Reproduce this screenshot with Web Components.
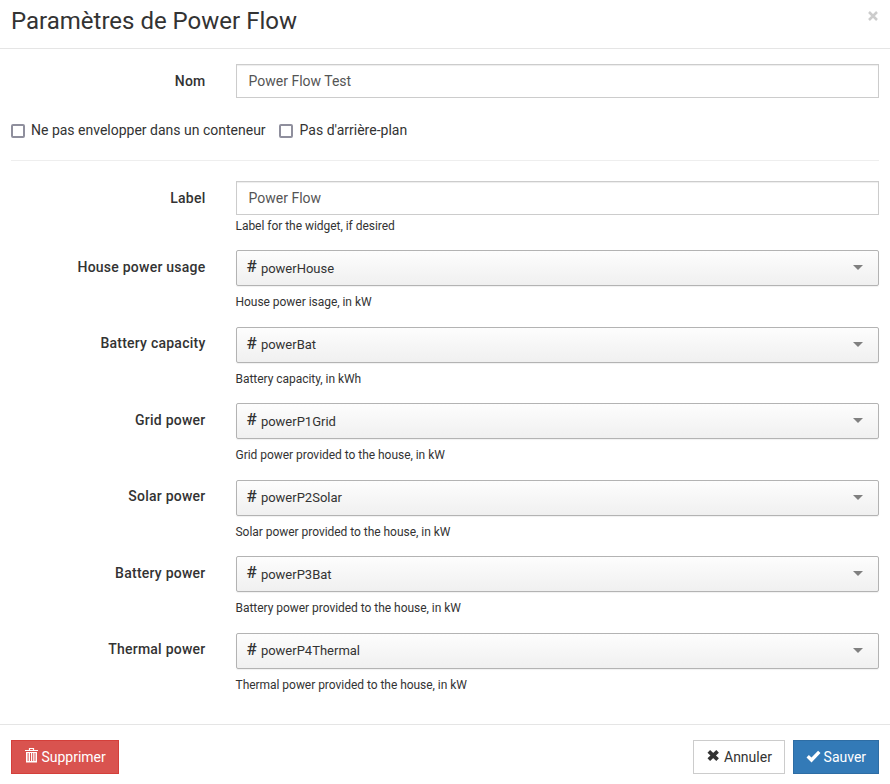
<!DOCTYPE html>
<html lang="fr">
<head>
<meta charset="utf-8">
<title>Paramètres de Power Flow</title>
<style>
body{margin:0;background:#fff;color:#333;font:14px/20px Roboto,"Liberation Sans",sans-serif}
</style>
</head>
<body>
<settings-dialog>
  <span slot="title">Paramètres de Power Flow</span>
  <form-row label="Nom"><text-box>Power Flow Test</text-box></form-row>
  <check-group>
    <check-option>Ne pas envelopper dans un conteneur</check-option>
    <check-option>Pas d'arrière-plan</check-option>
  </check-group>
  <form-row label="Label" help="Label for the widget, if desired" style="--row:69.25px"><text-box>Power Flow</text-box></form-row>
  <form-row label="House power usage" help="House power isage, in kW" class="s"><item-select>powerHouse</item-select></form-row>
  <form-row label="Battery capacity" help="Battery capacity, in kWh" class="s"><item-select>powerBat</item-select></form-row>
  <form-row label="Grid power" help="Grid power provided to the house, in kW" class="s"><item-select>powerP1Grid</item-select></form-row>
  <form-row label="Solar power" help="Solar power provided to the house, in kW" class="s"><item-select>powerP2Solar</item-select></form-row>
  <form-row label="Battery power" help="Battery power provided to the house, in kW" class="s"><item-select>powerP3Bat</item-select></form-row>
  <form-row label="Thermal power" help="Thermal power provided to the house, in kW" class="s"><item-select>powerP4Thermal</item-select></form-row>
  <action-button slot="left" kind="danger" icon="trash">Supprimer</action-button>
  <action-button slot="right" kind="default" icon="remove">Annuler</action-button>
  <action-button slot="right" kind="primary" icon="ok">Sauver</action-button>
</settings-dialog>
<script>
const define = (name, render) => customElements.define(name, class extends HTMLElement {
  connectedCallback() {
    if (!this.shadowRoot) this.attachShadow({mode: 'open'}).innerHTML = render(this);
  }
});

define('settings-dialog', () => `<style>
:host{display:flex;flex-direction:column;height:784px;box-sizing:border-box}
header{display:flex;justify-content:space-between;height:48px;border-bottom:1px solid #e5e5e5;padding:0 11px;flex:none}
h1{margin:0;font-size:24px;font-weight:400;line-height:42px}
svg{display:block;margin:11px 1px 0 0}
main{flex:1;padding:15px 11px 0}
footer{display:flex;gap:8px;height:44px;border-top:1px solid #e5e5e5;padding:15px 11px 0;flex:none}
i{flex:1}
</style><header><h1><slot name="title"></slot></h1><svg width="10" height="10"><path d="M1 1L9 9M9 1L1 9" stroke="#ccc" stroke-width="2.5"/></svg></header>
<main><slot></slot></main><footer><slot name="left"></slot><i></i><slot name="right"></slot></footer>`);

define('form-row', el => `<style>
:host{display:grid;grid-template-columns:194.5px 1fr;column-gap:30px;align-content:start;height:var(--row,49px)}
:host(.s){height:76.5px}
label{font-weight:500;text-align:right;padding-top:7px;letter-spacing:.24px}
:host(.s) label{padding-top:6.6px}
p{margin:0;font-size:12px;line-height:17px;padding-top:3px;letter-spacing:-.035px}
:host(.s) p{padding-top:8px}
</style><label>${el.getAttribute('label')}</label><div><slot></slot>${el.hasAttribute('help') ? `<p>${el.getAttribute('help')}</p>` : ''}</div>`);

define('text-box', () => `<style>
:host{display:block;height:34px;box-sizing:border-box;border:1px solid #ccc;padding:6px 12px;color:#555;box-shadow:inset 0 1px 1px rgba(0,0,0,.075)}
</style><slot></slot>`);

define('item-select', () => `<style>
:host{display:flex;align-items:center;height:36px;box-sizing:border-box;border:1px solid #b3b3b3;border-radius:2px;padding:0 15px 0 10px;background:linear-gradient(#fdfdfd,#f0f0f0);box-shadow:0 1px 1px rgba(0,0,0,.06);font-size:13px}
b{font-size:17px;font-weight:500;width:14.4px;line-height:20px;padding-bottom:4px}
span{flex:1;padding-top:1px}
svg{display:block;margin-top:-1px}
</style><b>#</b><span><slot></slot></span><svg width="10" height="5"><path d="M0 0H10L5 5Z" fill="#808080"/></svg>`);

define('check-group', () => `<style>
:host{display:flex;gap:13px;height:47px;margin-bottom:20px;border-bottom:1px solid #eee}
</style><slot></slot>`);

define('check-option', () => `<style>
:host{display:flex;gap:6px;height:20px;margin-top:7px}
:host(:last-child){gap:7px}
i{width:14px;height:14px;box-sizing:border-box;border:2px solid #8f8f9d;border-radius:2px;margin-top:4px;background:#fff}
</style><i></i><span><slot></slot></span>`);

const icons = {
  trash: '<path d="M4.5 2V.5h4V2M0 2.5h13" fill="none" stroke="#fff" stroke-width="1.2"/><path d="M1 4H12V14.5H1ZM2.6 5V13H3.6V5ZM5 5V13H6V5ZM7.2 5V13H8.2V5ZM9.5 5V13H10.5V5Z" fill="#fff" fill-rule="evenodd"/>',
  remove: '<path d="M1.8 3.4L10.6 11.6M10.6 3.4L1.8 11.6" stroke="#333" stroke-width="3.8"/>',
  ok: '<path d="M.7 8.3L4.5 12L12.3 3.9" fill="none" stroke="#fff" stroke-width="3.4"/>'
};
define('action-button', el => `<style>
:host{display:flex;height:34px;box-sizing:border-box;padding:6px 12px;border:1px solid #ccc;background:#fff;white-space:nowrap}
:host([kind=default]){width:92px}
:host([kind=danger]){background:#d9534f;border-color:#d43f3a;color:#fff;width:108px}
:host([kind=primary]){background:#337ab7;border-color:#2e6da4;color:#fff;width:86px}
:host([kind=primary]) svg{margin-right:3.6px}
:host([kind=danger]) svg{margin-right:3.4px}
svg{flex:none;display:block;margin:1px 4px 0 1px;overflow:visible}
</style><svg width="13" height="15">${icons[el.getAttribute('icon')]}</svg><span><slot></slot></span>`);
</script>
</body>
</html>
